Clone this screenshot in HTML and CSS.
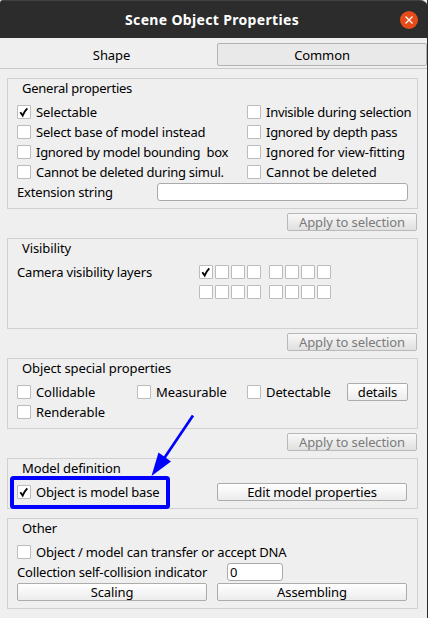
FILE: index.html
```
<!DOCTYPE html>
<html lang="en">
<head>
<meta charset="utf-8">
<title>Scene Object Properties</title>
<link rel="stylesheet" href="styles.css">
</head>
<body>
<svg class="defs" width="0" height="0" aria-hidden="true"><symbol id="tick" viewBox="0 0 14 14"><path d="M3.3 7.2 L5.7 10.5 Q7.3 6.3 10.3 3.3" fill="none" stroke="#000" stroke-width="1.9"/></symbol></svg>
<div class="window">
  <header class="titlebar">
    <h1>Scene Object Properties</h1>
    <svg class="close" viewBox="0 0 18 18"><circle cx="9" cy="9" r="9" fill="#e64c19"/><path d="M5.5 5.5l7 7M12.5 5.5l-7 7" stroke="#fff" stroke-width="1.3"/></svg>
  </header>
  <nav class="tabs"><div class="tab"><span>Shape</span></div><div class="tab active"><span>Common</span></div></nav>
  <main>
    <section class="group general">
      <h2>General properties</h2>
      <div class="row"><label class="c230"><i class="box"><svg><use href="#tick"/></svg></i><span class="loose">Selectable</span></label><label><i class="box"></i><span class="tight">Invisible during selection</span></label></div>
      <div class="row"><label class="c230"><i class="box"></i><span>Select base of model instead</span></label><label><i class="box"></i><span class="tight">Ignored by depth pass</span></label></div>
      <div class="row"><label class="c230"><i class="box"></i><span class="tight">Ignored by model bounding&nbsp; box</span></label><label><i class="box"></i><span class="loose">Ignored for view-fitting</span></label></div>
      <div class="row"><label class="c230"><i class="box"></i><span class="tight">Cannot be deleted during simul.</span></label><label><i class="box"></i><span class="loose">Cannot be deleted</span></label></div>
      <div class="row"><span class="c140">Extension string</span><div class="field wide"></div></div>
    </section>
    <div class="apply"><div class="button disabled">Apply to selection</div></div>
    <section class="group visibility">
      <h2 class="loose">Visibility</h2>
      <div class="row"><span class="c182">Camera visibility layers</span><div class="layers"><i class="box"><svg><use href="#tick"/></svg></i><i class="box"></i><i class="box"></i><i class="box"></i></div><div class="layers"><i class="box"></i><i class="box"></i><i class="box"></i><i class="box"></i></div></div>
      <div class="row"><span class="c182"></span><div class="layers"><i class="box"></i><i class="box"></i><i class="box"></i><i class="box"></i></div><div class="layers"><i class="box"></i><i class="box"></i><i class="box"></i><i class="box"></i></div></div>
    </section>
    <div class="apply"><div class="button disabled">Apply to selection</div></div>
    <section class="group special">
      <h2 class="loose">Object special properties</h2>
      <div class="row"><label class="c120"><i class="box"></i><span class="loose">Collidable</span></label><label class="c110"><i class="box"></i><span class="loose">Measurable</span></label><label class="c100"><i class="box"></i><span class="loose">Detectable</span></label><div class="button details">details</div></div>
      <div class="row"><label><i class="box"></i><span class="loose">Renderable</span></label></div>
    </section>
    <div class="apply"><div class="button disabled">Apply to selection</div></div>
    <section class="group model">
      <h2 class="loose">Model definition</h2>
      <div class="row"><label class="c200"><i class="box"><svg><use href="#tick"/></svg></i><span>Object is model base</span></label><div class="button half">Edit model properties</div></div>
    </section>
    <section class="group other">
      <h2 class="loose">Other</h2>
      <div class="row"><label><i class="box"></i><span>Object / model can transfer or accept DNA</span></label></div>
      <div class="row"><span class="c210">Collection self-collision indicator</span><div class="field small">0</div></div>
      <div class="row"><div class="button half gap">Scaling</div><div class="button half">Assembling</div></div>
    </section>
  </main>
  <svg class="callout" viewBox="0 0 428 618"><rect x="12" y="478" width="156" height="29" rx="1.5" fill="none" stroke="#00f" stroke-width="4"/><path d="M193 415.5L163 460" stroke="#00f" stroke-width="2.7"/><path d="M151.5 476L158.5 452.5L171 461.5Z" fill="#00f"/></svg>
</div>
</body>
</html>
```
FILE: styles.css
```
* { box-sizing: border-box; }
body { margin: 0; font: 13px/20px "Noto Sans", sans-serif; letter-spacing: -0.18px; color: #000; background: #efefef; }
.tight { letter-spacing: -0.28px; }
.loose { letter-spacing: -0.1px; }
.defs { position: absolute; }
.window { position: relative; width: 428px; height: 618px; overflow: hidden; background: #efefef; border-right: 1px solid #2b2b2b; }
.titlebar { display: flex; align-items: center; justify-content: flex-end; height: 38px; width: 428px; padding-right: 10px; background: #2c2c2c; border-top: 1px solid #414141; border-radius: 3px 8px 0 0; }
h1 { margin: 0 101px 0 0; color: #fff; font-size: 14px; line-height: 20px; font-weight: 700; letter-spacing: 0.33px; white-space: nowrap; }
.close { width: 18px; height: 18px; flex: none; }
.tabs { display: grid; grid-template-columns: 217px 210px; height: 31px; padding-top: 5px; border-bottom: 1px solid #c9c9c9; }
.tab { height: 23px; line-height: 24px; text-align: center; padding-left: 6px; letter-spacing: -0.1px; }
.tab.active { padding: 0; background: #e9e9e9; border: 1px solid #b2b2b2; border-radius: 2px; line-height: 22px; }
main { padding: 9px 9px 0 7px; }
.group { width: 411px; border: 1px solid #d0d0d0; padding: 0 9px; }
h2 { margin: -1px 0 4px 5px; font-size: 13px; line-height: 20px; font-weight: 400; white-space: nowrap; }
.general { height: 131px; }
.general h2 { letter-spacing: -0.25px; }
.visibility, .other { height: 91px; }
.special { height: 71px; }
.model { height: 51px; margin-bottom: 9px; }
.row { display: flex; align-items: center; height: 20px; white-space: nowrap; }
.row > * { flex: none; }
label { display: flex; align-items: center; gap: 5px; }
.box { display: block; width: 14px; height: 14px; background: #fff; border: 1px solid #bcbcbc; border-radius: 1px; }
.box svg { display: block; width: 14px; height: 14px; margin: -1px; }
.c100 { width: 100px; } .c110 { width: 110px; } .c120 { width: 120px; } .c140 { width: 140px; }
.c182 { width: 182px; } .c200 { width: 200px; } .c210 { width: 210px; } .c230 { width: 230px; }
.layers { display: flex; gap: 2px; margin-right: 8px; }
.field { height: 18px; background: #fff; border: 1px solid #aaa; border-radius: 3px; line-height: 16px; padding-left: 2px; }
.field.wide { width: 251px; }
.field.small { width: 56px; }
.button { height: 18px; line-height: 17px; text-align: center; border: 1px solid #acacac; border-radius: 2px; background: linear-gradient(#fff, #ececec); letter-spacing: -0.12px; white-space: nowrap; }
.disabled { width: 130px; color: #7b7b7b; border-color: #b9b9b9; background: linear-gradient(#f8f8f8, #e0e0e0); }
.apply { display: flex; justify-content: flex-end; height: 29px; padding: 4px 1px 0 0; }
.details { width: 61px; }
.half { width: 190px; }
.gap { margin-right: 10px; }
.callout { position: absolute; left: 0; top: 0; width: 428px; height: 618px; pointer-events: none; }
```
